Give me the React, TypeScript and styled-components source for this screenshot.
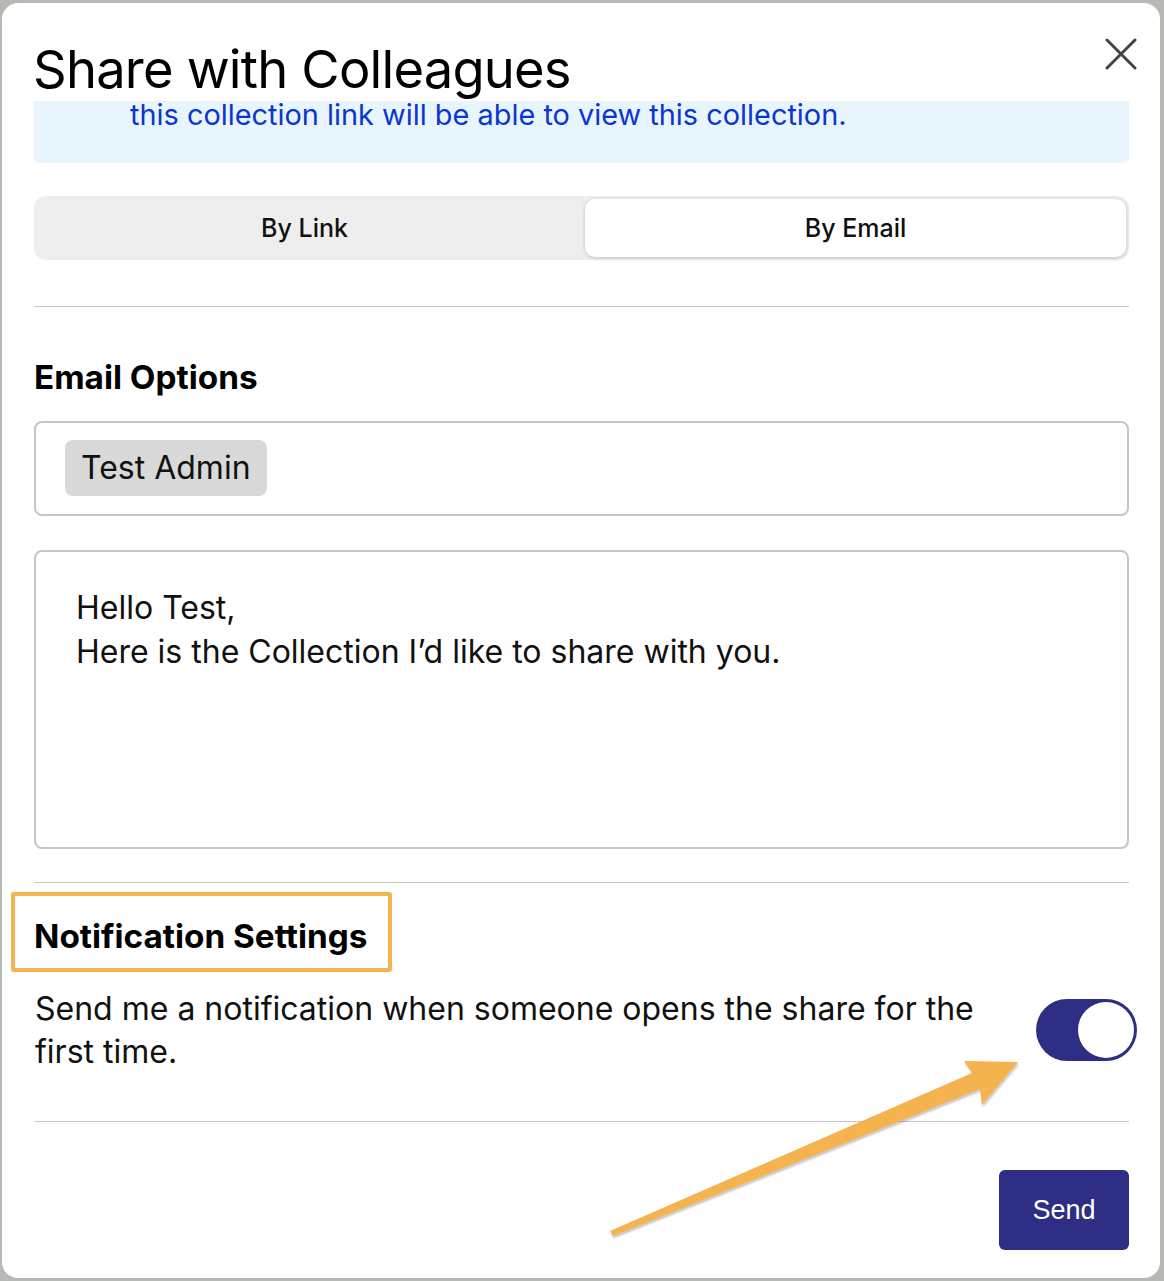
import React from 'react';
import styled, { createGlobalStyle } from 'styled-components';

const GlobalStyle = createGlobalStyle`
  html, body {
    margin: 0;
    padding: 0;
    background: #b7b9b5;
  }
  body {
    font-family: Inter, Roboto, "Noto Sans", sans-serif;
    color: #111;
  }
`;

const Backdrop = styled.div`
  position: relative;
  height: 1281px;
  box-sizing: border-box;
  padding: 3px 4px 3px 2px;
`;

const Modal = styled.div`
  height: 100%;
  box-sizing: border-box;
  background: #fff;
  border-radius: 16px;
  padding: 0 31px 28px 32px;
  display: flex;
  flex-direction: column;
`;

const Header = styled.div`
  display: flex;
  justify-content: space-between;
  align-items: flex-start;
  padding-top: 34px;
`;

const Title = styled.h1`
  margin: 0 0 0 -1px;
  font-size: 52.5px;
  line-height: 64px;
  font-weight: 400;
  color: #000;
  letter-spacing: -0.8px;
`;

const CloseButton = styled.button`
  border: 0;
  background: none;
  padding: 0;
  margin: 1px -8px 0 0;
  width: 32px;
  height: 32px;
  cursor: pointer;
`;

const InfoBox = styled.div`
  background: #e8f5fd;
  border-radius: 0 0 6px 6px;
  padding: 0 0 34px 96px;
  font-size: 28.9px;
  line-height: 28px;
  color: #0b36d0;
`;

const Tabs = styled.div`
  margin-top: 33px;
  height: 64px;
  display: flex;
  background: #eeeeee;
  border-radius: 12px;
`;

const Tab = styled.div<{ $active?: boolean }>`
  flex: 1;
  display: flex;
  align-items: center;
  justify-content: center;
  font-size: 25px;
  font-weight: 500;
  color: #111;
  border-radius: 10px;
  margin: ${p => (p.$active ? '3px 3px 3px 10px' : '0')};
  background: ${p => (p.$active ? '#fff' : 'transparent')};
  box-shadow: ${p => (p.$active ? '0 1px 4px rgba(0,0,0,0.18)' : 'none')};
`;

const Divider = styled.hr<{ $top: number }>`
  margin: ${p => p.$top}px 0 0;
  border: 0;
  border-top: 1px solid #c8c8c8;
`;

const Heading = styled.h2<{ $top: number }>`
  position: relative;
  align-self: flex-start;
  margin: ${p => p.$top}px 0 0;
  font-size: 33.3px;
  line-height: 40px;
  font-weight: 700;
  color: #000;
`;

const Highlight = styled.span`
  position: absolute;
  left: -23px;
  right: -25px;
  top: -24px;
  bottom: -16px;
  border: 4px solid #f5b350;
  border-radius: 3px;
`;

const RecipientBox = styled.div`
  margin-top: 24px;
  border: 2px solid #c6c6c6;
  border-radius: 8px;
  padding: 17px 29px 18px;
  display: flex;
`;

const Chip = styled.span`
  height: 56px;
  display: inline-flex;
  align-items: center;
  padding: 0 16px;
  background: #d9d9d9;
  border-radius: 8px;
  font-size: 32px;
  color: #111;
`;

const MessageBox = styled.div`
  margin-top: 34px;
  height: 300px;
  box-sizing: border-box;
  border: 2px solid #c6c6c6;
  border-radius: 8px;
  padding: 34px 40px;
  font-size: 32px;
  line-height: 44px;
  color: #111;
`;

const SettingRow = styled.div`
  margin-top: 31px;
  display: flex;
  align-items: center;
  gap: 40px;
`;

const SettingText = styled.p`
  flex: 1;
  margin: 0 0 0 1px;
  font-size: 32px;
  line-height: 43px;
  color: #111;
`;

const Toggle = styled.div<{ $on?: boolean }>`
  flex: none;
  width: 101px;
  height: 62px;
  margin-right: -8px;
  box-sizing: border-box;
  border-radius: 31px;
  background: #2e2e84;
  padding: 3px;
  display: flex;
  justify-content: ${p => (p.$on ? 'flex-end' : 'flex-start')};
`;

const Knob = styled.span`
  width: 56px;
  height: 56px;
  border-radius: 50%;
  background: #fff;
`;

const Footer = styled.div`
  margin-top: 48px;
  display: flex;
  justify-content: flex-end;
`;

const SendButton = styled.button`
  width: 130px;
  height: 80px;
  border: 0;
  border-radius: 6px;
  background: #2e2e84;
  color: #fff;
  font-family: "Liberation Sans", Arial, sans-serif;
  font-size: 27px;
  cursor: pointer;
`;

const ArrowOverlay = styled.svg`
  position: absolute;
  left: 0;
  top: 0;
  pointer-events: none;
`;

const App: React.FC = () => {
  return (
    <>
      <GlobalStyle />
      <Backdrop>
        <Modal>
          <Header>
            <Title>Share with Colleagues</Title>
            <CloseButton aria-label="Close">
              <svg width="32" height="32" viewBox="0 0 32 32">
                <path d="M2 2 L30 30 M30 2 L2 30" stroke="#444" strokeWidth="3" strokeLinecap="round" />
              </svg>
            </CloseButton>
          </Header>
          <InfoBox>this collection link will be able to view this collection.</InfoBox>
          <Tabs>
            <Tab>By Link</Tab>
            <Tab $active>By Email</Tab>
          </Tabs>
          <Divider $top={46} />
          <Heading $top={50}>Email Options</Heading>
          <RecipientBox>
            <Chip>Test Admin</Chip>
          </RecipientBox>
          <MessageBox>
            Hello Test,
            <br />
            Here is the Collection I’d like to share with you.
          </MessageBox>
          <Divider $top={33} />
          <Heading $top={33}>
            Notification Settings
            <Highlight />
          </Heading>
          <SettingRow>
            <SettingText>Send me a notification when someone opens the share for the first time.</SettingText>
            <Toggle $on>
              <Knob />
            </Toggle>
          </SettingRow>
          <Divider $top={48} />
          <Footer>
            <SendButton>Send</SendButton>
          </Footer>
        </Modal>
        <ArrowOverlay width="1164" height="1281" viewBox="0 0 1164 1281">
          <defs>
            <filter id="arrowShadow" x="-10%" y="-10%" width="120%" height="120%">
              <feDropShadow dx="1" dy="2" stdDeviation="1.2" floodColor="#000" floodOpacity="0.25" />
            </filter>
          </defs>
          <polygon
            points="610,1231 972,1073 964,1061 1018,1062 982,1105 980,1089 613,1236"
            fill="#f5b350"
            filter="url(#arrowShadow)"
          />
        </ArrowOverlay>
      </Backdrop>
    </>
  );
};

export default App;
